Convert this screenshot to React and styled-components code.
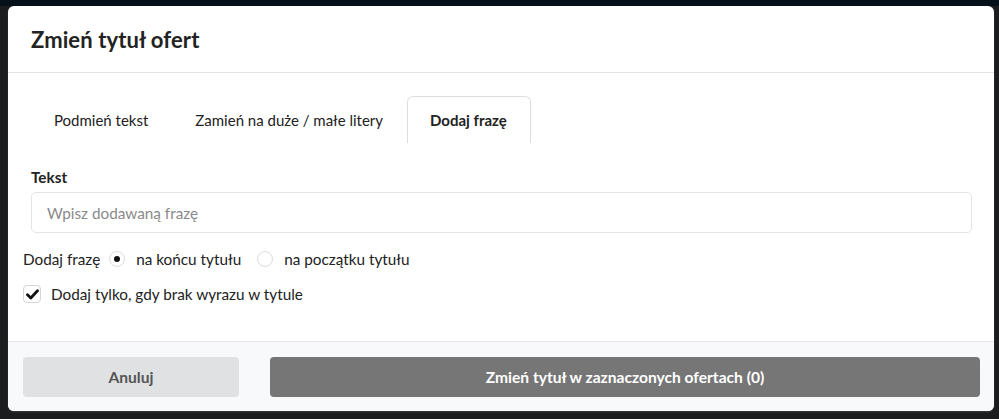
import React from "react";
import styled, { createGlobalStyle } from "styled-components";

const Global = createGlobalStyle`
  html, body { margin: 0; padding: 0; }
  body {
    background: #1b1c1d;
    font-family: Lato, "Open Sans", "Liberation Sans", sans-serif;
    color: #222;
    height: 419px;
    overflow: hidden;
  }
`;

const Backdrop = styled.div`
  position: relative;
  width: 999px;
  height: 419px;
  background: linear-gradient(to bottom, #061019 0, #061019 6px, #1b1c1d 6px);
  padding: 6px 5px 0 8px;
  box-sizing: border-box;
`;

const Modal = styled.div`
  background: #fff;
  border-radius: 6px;
  overflow: hidden;
  display: flex;
  flex-direction: column;
  height: 405px;
  box-shadow: 0 1px 2px rgba(255,255,255,0.15);
`;

const Header = styled.div`
  height: 67px;
  box-sizing: border-box;
  border-bottom: 1px solid #e3e3e3;
  display: flex;
  align-items: center;
  padding: 0 23px;
`;

const Title = styled.h2`
  margin: 0;
  font-size: 22px;
  font-weight: 700;
  color: #222;
  letter-spacing: 0.1px;
`;

const Body = styled.div`
  flex: 1;
  display: flex;
  flex-direction: column;
  padding: 23px 22px 0 15px;
  font-size: 15.3px;
`;

const Tabs = styled.div`
  display: flex;
  padding-left: 8px;
  height: 47px;
`;

const Tab = styled.div`
  padding: 0 23px 0 22px;
  display: flex;
  align-items: center;
  font-size: 15px;
  font-weight: ${(p) => (p.$active ? 700 : 400)};
  color: #222;
  border: 1px solid ${(p) => (p.$active ? "#dedede" : "transparent")};
  border-bottom: none;
  border-radius: 6px 6px 0 0;
`;

const Label = styled.div`
  margin: 25px 0 0 8px;
  font-weight: 700;
  color: #222;
`;

const Input = styled.input`
  margin: 6px 0 0 8px;
  height: 41px;
  box-sizing: border-box;
  border: 1px solid #e4e4e4;
  border-radius: 5px;
  padding: 0 15px;
  font-family: inherit;
  font-size: 15.3px;
  color: #222;
  outline: none;
  &::placeholder { color: #8a8a8a; }
`;

const RadioRow = styled.div`
  display: flex;
  align-items: center;
  margin-top: 17px;
  color: #222;
`;

const RadioLabel = styled.span`
  margin-right: ${(p) => p.$gap || 0}px;
`;

const Radio = styled.span`
  width: 16px;
  height: 16px;
  box-sizing: border-box;
  border-radius: 50%;
  border: 1px solid #dcdcdc;
  display: inline-flex;
  align-items: center;
  justify-content: center;
  margin-right: 11px;
  &::after {
    content: "";
    width: 6px;
    height: 6px;
    border-radius: 50%;
    background: ${(p) => (p.$checked ? "#111" : "transparent")};
  }
`;

const CheckRow = styled.div`
  display: flex;
  align-items: center;
  margin-top: 17px;
  color: #222;
`;

const Box = styled.span`
  width: 18px;
  height: 18px;
  box-sizing: border-box;
  border: 1px solid #d6d6d6;
  border-radius: 4px;
  display: inline-flex;
  align-items: center;
  justify-content: center;
  margin-right: 10px;
`;

const Footer = styled.div`
  height: 70px;
  box-sizing: border-box;
  border-top: 1px solid #e6e7ea;
  background: #f8f9fb;
  padding: 15px 14px 15px 15px;
  display: flex;
  gap: 31px;
`;

const Button = styled.button`
  height: 40px;
  border: none;
  border-radius: 4px;
  font-family: inherit;
  font-size: 15.6px;
  font-weight: 700;
  width: ${(p) => (p.$primary ? "auto" : "216px")};
  flex: ${(p) => (p.$primary ? 1 : "none")};
  background: ${(p) => (p.$primary ? "#767676" : "#e0e1e3")};
  color: ${(p) => (p.$primary ? "#fff" : "#555")};
`;

export default function App() {
  return (
    <>
      <Global />
      <Backdrop>
        <Modal>
          <Header>
            <Title>Zmień tytuł ofert</Title>
          </Header>
          <Body>
            <Tabs>
              <Tab>Podmień tekst</Tab>
              <Tab>Zamień na duże / małe litery</Tab>
              <Tab $active>Dodaj frazę</Tab>
            </Tabs>
            <Label>Tekst</Label>
            <Input placeholder="Wpisz dodawaną frazę" />
            <RadioRow>
              <RadioLabel $gap={9}>Dodaj frazę</RadioLabel>
              <Radio $checked />
              <RadioLabel $gap={16}>na końcu tytułu</RadioLabel>
              <Radio />
              <RadioLabel>na początku tytułu</RadioLabel>
            </RadioRow>
            <CheckRow>
              <Box>
                <svg width="13" height="11" viewBox="0 0 13 11">
                  <path d="M1.5 5.8 L4.8 9 L11.5 1.8" fill="none" stroke="#111" strokeWidth="2.8" strokeLinecap="round" strokeLinejoin="round" />
                </svg>
              </Box>
              Dodaj tylko, gdy brak wyrazu w tytule
            </CheckRow>
          </Body>
          <Footer>
            <Button>Anuluj</Button>
            <Button $primary>Zmień tytuł w zaznaczonych ofertach (0)</Button>
          </Footer>
        </Modal>
      </Backdrop>
    </>
  );
}
